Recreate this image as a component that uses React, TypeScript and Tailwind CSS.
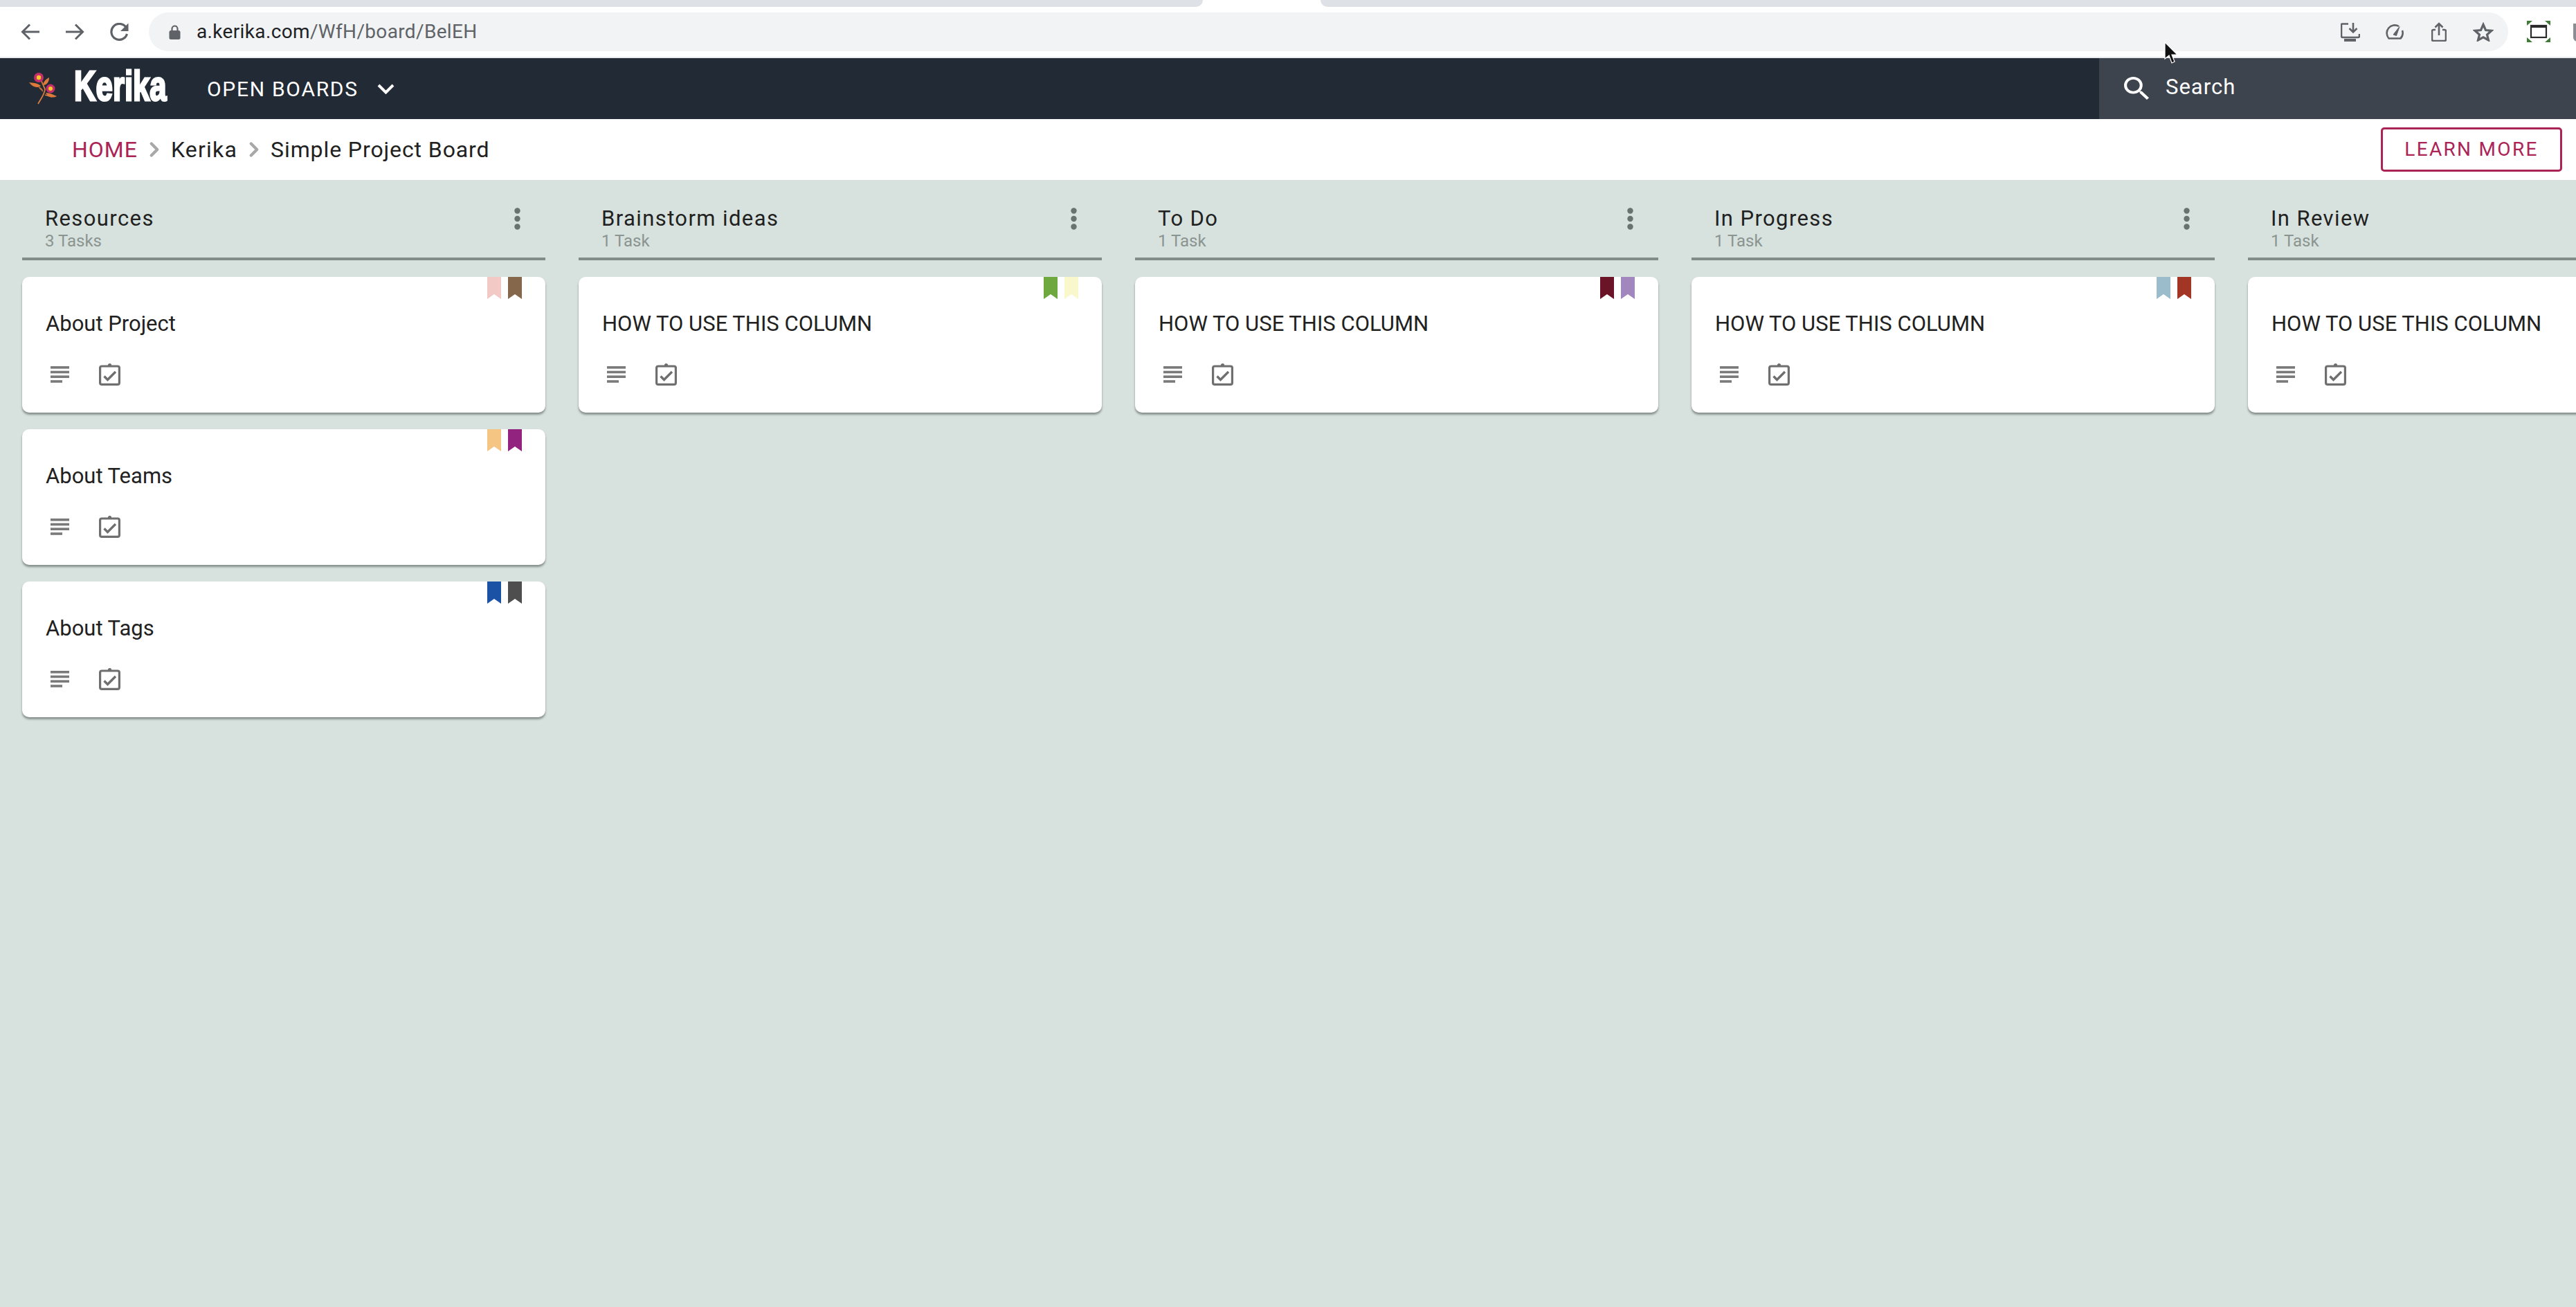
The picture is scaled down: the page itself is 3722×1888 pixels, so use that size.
import { ChevronRight } from "lucide-react"

type CardData = { title: string; tags: [string, string] }
type ColumnData = { name: string; count: string; menu: boolean; cards: CardData[] }

const HOW_TO = "HOW TO USE THIS COLUMN"

const columns: ColumnData[] = [
    {
        name: "Resources",
        count: "3 Tasks",
        menu: true,
        cards: [
            { title: "About Project", tags: ["bg-[#f2c9c5]", "bg-[#85684c]"] },
            { title: "About Teams", tags: ["bg-[#f4c583]", "bg-[#92237f]"] },
            { title: "About Tags", tags: ["bg-[#1b52a6]", "bg-[#4e4e4e]"] },
        ],
    },
    { name: "Brainstorm ideas", count: "1 Task", menu: true, cards: [{ title: HOW_TO, tags: ["bg-[#6fa83f]", "bg-[#f9f7cc]"] }] },
    { name: "To Do", count: "1 Task", menu: true, cards: [{ title: HOW_TO, tags: ["bg-[#6b1428]", "bg-[#a187bd]"] }] },
    { name: "In Progress", count: "1 Task", menu: true, cards: [{ title: HOW_TO, tags: ["bg-[#9bbccb]", "bg-[#a33525]"] }] },
    { name: "In Review", count: "1 Task", menu: false, cards: [{ title: HOW_TO, tags: ["bg-transparent", "bg-transparent"] }] },
]

const Arrow = ({ flip }: { flip?: boolean }) => (
    <svg width="27" height="24" viewBox="0 0 27 24" fill="none" stroke="#5f6368" strokeWidth="3" className={flip ? "rotate-180" : ""}>
        <path d="M27 12H2M13 1.5 2.5 12 13 22.5" />
    </svg>
)

const Reload = () => (
    <svg width="29" height="26" viewBox="0 0 29 26" fill="none">
        <path d="M24 6.5A11.5 11.5 0 1 0 25.5 16" stroke="#5f6368" strokeWidth="3.2" />
        <path d="M27.5 0.5V12H16Z" fill="#5f6368" />
    </svg>
)

const Lock = () => (
    <svg width="17" height="21" viewBox="0 0 17 21" fill="#5f6368">
        <path d="M4.5 9V5.5a4 4 0 0 1 8 0V9" fill="none" stroke="#5f6368" strokeWidth="2.2" />
        <rect x="0.5" y="8" width="16" height="13" rx="2.5" />
    </svg>
)

const InstallIcon = () => (
    <svg width="28" height="27" viewBox="0 0 28 27" fill="none" stroke="#5f6368" strokeWidth="2.6">
        <path d="M11 1.5H2a1 1 0 0 0-1 1V19a2 2 0 0 0 2 2h22a2 2 0 0 0 2-2v-3" />
        <path d="M18 0v13M12.5 8l5.5 5.5L23.5 8" />
        <path d="M5 25h17" strokeWidth="4" />
    </svg>
)

const GaugeIcon = () => (
    <svg width="26" height="22" viewBox="0 0 26 22" fill="none" stroke="#5f6368" strokeWidth="2.6">
        <path d="M19 3A11.5 11.5 0 0 0 4.5 20.5h17A11.5 11.5 0 0 0 24 9" />
        <path d="M11 15 20 3.5 15.5 16.5Z" fill="#5f6368" strokeWidth="1" />
    </svg>
)

const ShareIcon = () => (
    <svg width="22" height="28" viewBox="0 0 22 28" fill="none" stroke="#5f6368" strokeWidth="2.6">
        <path d="M6 11H3a2 2 0 0 0-2 2v12a2 2 0 0 0 2 2h16a2 2 0 0 0 2-2V13a2 2 0 0 0-2-2h-3" />
        <path d="M11 19V2M5.5 7.5 11 2l5.5 5.5" />
    </svg>
)

const StarIcon = () => (
    <svg width="30" height="28" viewBox="0 0 30 28" fill="none" stroke="#5f6368" strokeWidth="3.2">
        <path d="M15 3.5 18.5 11.5 27 12.3 20.5 18 22.5 26 15 21.8 7.5 26 9.5 18 3 12.3 11.5 11.5Z" />
    </svg>
)

const WindowIcon = () => (
    <svg width="34" height="31" viewBox="0 0 34 31" className="shrink-0">
        <path d="M0 0H8L0 7ZM34 0H26L34 7ZM0 31H8L0 24ZM34 31H26L34 24Z" fill="#3f7a37" />
        <rect x="6" y="7" width="22" height="17" fill="none" stroke="#2b2b2b" strokeWidth="2.2" />
        <rect x="5" y="6" width="24" height="4" fill="#2b2b2b" />
    </svg>
)

const FlowerLogo = () => (
    <svg width="42" height="48" viewBox="0 0 42 48" className="shrink-0">
        <path d="M14 46C19 37 23 33 24 25L18 11M24 33 34 36" fill="none" stroke="#d67d3f" strokeWidth="1.8" />
        <path d="M18 20C12 15 6 16 1 15 6 22 13 24 18 20Z" fill="#dd7a3a" />
        <path d="M21 19C22 13 26 10 30 8 30 14 27 19 21 19Z" fill="#dd7a3a" />
        <path d="M25 30C30 30 37 33 41 35 36 38 28 37 25 30Z" fill="#dd7a3a" />
        <path d="M21 29C19 26 16 25 14 21 18 22 22 25 21 29Z" fill="#c96b34" />
        <circle cx="15" cy="8" r="7" fill="#c22e6b" />
        <circle cx="15" cy="8" r="3.2" fill="#f6c928" />
        <circle cx="32" cy="24" r="6.5" fill="#c22e6b" />
        <circle cx="32" cy="24" r="3" fill="#f6c928" />
    </svg>
)

const Cursor = () => (
    <svg width="20" height="32" viewBox="0 0 20 32" className="absolute left-[3127px] top-[60px]">
        <path d="M1 1V25L7 20 11 31 15 29 11 19H19Z" fill="#111" stroke="#fff" strokeWidth="1.2" />
    </svg>
)

const ExpandIcon = () => (
    <svg width="25" height="15" viewBox="0 0 25 15" fill="none" stroke="#fff" strokeWidth="4" className="shrink-0">
        <path d="M2 2 12.5 12.5 23 2" />
    </svg>
)

const SearchIcon = () => (
    <svg width="36" height="33" viewBox="3 3 17.5 17.5" preserveAspectRatio="none" fill="#fff" className="shrink-0">
        <path d="M15.5 14h-.79l-.28-.27A6.471 6.471 0 0 0 16 9.5 6.5 6.5 0 1 0 9.5 16c1.61 0 3.09-.59 4.23-1.57l.27.28v.79l5 4.99L20.49 19l-4.99-5zm-6 0C7.01 14 5 11.99 5 9.5S7.01 5 9.5 5 14 7.01 14 9.5 11.99 14 9.5 14z" />
    </svg>
)

const Kebab = () => (
    <svg width="9" height="32" viewBox="0 0 9 32" fill="#68726f">
        <circle cx="4.5" cy="4.5" r="4.2" />
        <circle cx="4.5" cy="16" r="4.2" />
        <circle cx="4.5" cy="27.5" r="4.2" />
    </svg>
)

const LinesIcon = () => (
    <svg width="27" height="24" viewBox="0 0 27 24" fill="#7a7a7a">
        <rect width="27" height="3.6" />
        <rect y="6.7" width="27" height="3.6" />
        <rect y="13.4" width="27" height="3.6" />
        <rect y="20.2" width="17" height="3.6" />
    </svg>
)

const ClipboardIcon = () => (
    <svg width="31" height="33" viewBox="0 0 31 33" fill="none" stroke="#6f6f6f" strokeWidth="3.2">
        <rect x="1.6" y="5" width="27.8" height="26.4" rx="2.5" />
        <circle cx="15.5" cy="3.5" r="2" fill="#6f6f6f" strokeWidth="1.2" />
        <path d="M7.5 19.5 12.5 24.5 24 13" strokeWidth="3.4" />
    </svg>
)

const Bookmark = ({ color }: { color: string }) => (
    <div className={`h-[32px] w-[20px] [clip-path:polygon(0_0,100%_0,100%_100%,50%_78%,0_100%)] ${color}`} />
)

const TaskCard = ({ card }: { card: CardData }) => (
    <div className="relative h-[196px] rounded-[10px] bg-white pl-[34px] pt-[48px] shadow-[0_3px_3px_rgba(70,80,78,0.55)]">
        <div className="absolute right-[34px] top-0 flex gap-[10px]">
            <Bookmark color={card.tags[0]} />
            <Bookmark color={card.tags[1]} />
        </div>
        <div className="text-[31px] leading-[40px] text-[#212121]">{card.title}</div>
        <div className="ml-[7px] mt-[36px] flex h-[33px] items-center gap-[43px]">
            <LinesIcon />
            <ClipboardIcon />
        </div>
    </div>
)

const Column = ({ column }: { column: ColumnData }) => (
    <div className="w-[756px] shrink-0">
        <div className="flex h-[116px] items-start justify-between border-b-4 border-[#818c88] pl-[33px] pr-[36px] pt-[36px]">
            <div>
                <div className="text-[31px] leading-[40px] tracking-[1.4px] text-[#212121]">{column.name}</div>
                <div className="text-[24px] leading-[24px] text-[#8a9491]">{column.count}</div>
            </div>
            {column.menu && (
                <div className="pt-[4px]">
                    <Kebab />
                </div>
            )}
        </div>
        <div className="mt-[24px] flex flex-col gap-[24px]">
            {column.cards.map((card) => (
                <TaskCard key={card.title} card={card} />
            ))}
        </div>
    </div>
)

export default function App() {
    return (
        <div className="relative flex h-[1888px] w-[3722px] flex-col overflow-hidden bg-[#d7e1dd] font-['Roboto',sans-serif]">
            <div className="flex h-[10px] shrink-0 bg-white">
                <div className="w-[1738px] rounded-br-[10px] bg-[#dee1e6]" />
                <div className="flex-1" />
                <div className="w-[1814px] rounded-bl-[10px] bg-[#dee1e6]" />
            </div>

            <div className="flex h-[74px] shrink-0 items-start overflow-hidden border-b-2 border-[#e8eaed] bg-white">
                <div className="flex h-[72px] w-[215px] shrink-0 items-center pl-[30px]">
                    <Arrow />
                    <div className="ml-[38px]">
                        <Arrow flip />
                    </div>
                    <div className="ml-[36px]">
                        <Reload />
                    </div>
                </div>
                <div className="mt-[8px] flex h-[56px] w-[3409px] shrink-0 items-center rounded-full bg-[#f1f3f4] pl-[29px]">
                    <Lock />
                    <div className="ml-[23px] text-[28px] tracking-[0.35px] text-[#202124]">
                        a.kerika.com<span className="text-[#5f6368]">/WfH/board/BelEH</span>
                    </div>
                    <div className="ml-auto flex items-center pr-[21px]">
                        <InstallIcon />
                        <div className="ml-[37px]">
                            <GaugeIcon />
                        </div>
                        <div className="ml-[40px]">
                            <ShareIcon />
                        </div>
                        <div className="ml-[38px]">
                            <StarIcon />
                        </div>
                    </div>
                </div>
                <div className="ml-[27px] mt-[20px] shrink-0">
                    <WindowIcon />
                </div>
                <div className="ml-[33px] mt-[24px] h-[26px] w-[8px] shrink-0 rounded-bl-[6px] bg-[#8a8d91]" />
            </div>

            <div className="flex h-[88px] shrink-0 items-center bg-[#222a35]">
                <div className="ml-[41px]">
                    <FlowerLogo />
                </div>
                <div className="-mt-[8px] ml-[24px] w-[135px]">
                    <div className="origin-left scale-x-[0.705] font-['Liberation_Sans',sans-serif] text-[62px] font-bold leading-[60px] text-white [-webkit-text-stroke:3px_white]">
                        Kerika
                    </div>
                </div>
                <div className="ml-[57px] text-[30px] tracking-[1.7px] text-white">OPEN BOARDS</div>
                <div className="ml-[27px]">
                    <ExpandIcon />
                </div>
                <div className="ml-auto flex h-full w-[689px] items-center bg-[#3e444e] pl-[36px]">
                    <div className="-mt-[1px]">
                        <SearchIcon />
                    </div>
                    <div className="-mt-[4px] ml-[24px] text-[31px] tracking-[1px] text-white">Search</div>
                </div>
            </div>

            <div className="flex h-[88px] shrink-0 items-center bg-white pl-[104px] pr-[20px]">
                <span className="text-[32px] tracking-[1px] text-[#ab2456]">HOME</span>
                <ChevronRight className="mx-[7px] text-[#a8a8a8]" size={34} strokeWidth={3} />
                <span className="text-[32px] tracking-[1.2px] text-[#212121]">Kerika</span>
                <ChevronRight className="mx-[7px] text-[#a8a8a8]" size={34} strokeWidth={3} />
                <span className="text-[32px] tracking-[0.9px] text-[#212121]">Simple Project Board</span>
                <div className="ml-auto flex h-[64px] w-[262px] items-center justify-center rounded-[5px] border-[3px] border-[#ab2456] text-[28px] tracking-[2.3px] text-[#ab2456]">
                    LEARN MORE
                </div>
            </div>

            <div className="flex flex-1 gap-[48px] pl-[32px]">
                {columns.map((column) => (
                    <Column key={column.name} column={column} />
                ))}
            </div>

            <Cursor />
        </div>
    )
}
